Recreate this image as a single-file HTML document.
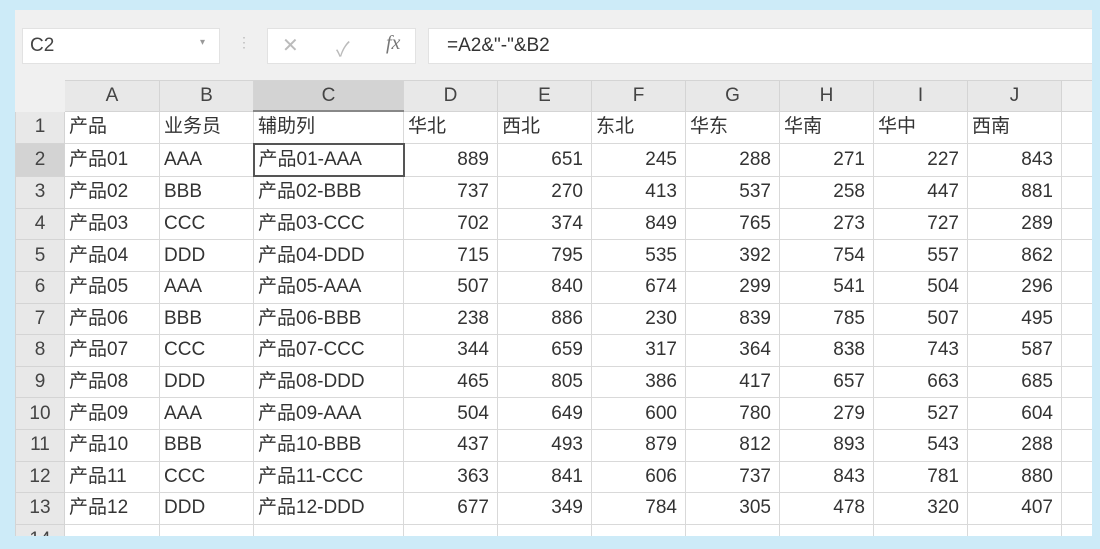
<!DOCTYPE html>
<html><head><meta charset="utf-8"><style>
body{margin:0;width:1100px;height:549px;background:#cdebf8;overflow:hidden;font-family:"Liberation Sans","Noto Sans CJK SC",sans-serif;position:relative}
#p{position:absolute;left:15px;top:10px;width:1077px;height:526px;background:#f0f0f0;overflow:hidden}
.box{position:absolute;background:#fff;border:1px solid #e2e2e2}
table{position:absolute;left:0;top:70px;border-collapse:collapse;table-layout:fixed;width:1096px}
td{height:30.6px;line-height:20px;border:1px solid #d9d9d9;font-size:19px;color:#333;padding:0 4px;white-space:nowrap;overflow:hidden;background:#fff;vertical-align:middle}
td.n{text-align:right;padding-right:8px}
tr.h td{background:#e8e8e8;text-align:center;color:#444;height:29px;border-color:#d4d4d4}
td.r{background:#e8e8e8;text-align:center;color:#444;border-color:#d4d4d4}
</style></head><body>
<div id="p">
<div class="box" style="left:7px;top:18px;width:196px;height:34px"><span style="position:absolute;left:7px;top:6px;font-size:19px;color:#444">C2</span><span style="position:absolute;right:14px;top:8px;font-size:10px;color:#999">▾</span></div>
<span style="position:absolute;left:222px;top:24px;color:#bbb;font-size:14px">⋮</span>
<div class="box" style="left:252px;top:18px;width:147px;height:34px;color:#bbb;font-size:20px"><span style="position:absolute;left:14px;top:4px">✕</span><span style="position:absolute;left:68px;top:4px">✓</span><span style="position:absolute;left:118px;top:3px;font-family:'Liberation Serif',serif;font-style:italic;color:#777">fx</span></div>
<div class="box" style="left:413px;top:18px;width:680px;height:34px"><span style="position:absolute;left:18px;top:6px;font-size:19px;color:#333">=A2&amp;"-"&amp;B2</span></div>
<svg style="position:absolute;left:20px;top:74px" width="28" height="24"><polygon points="27,0 27,23 4,23" fill="#bdbdbd"/></svg>
<table>
<colgroup><col style="width:49px"><col style="width:95px"><col style="width:94px"><col style="width:150px"><col style="width:94px"><col style="width:94px"><col style="width:94px"><col style="width:94px"><col style="width:94px"><col style="width:94px"><col style="width:94px"><col style="width:50px"></colgroup>
<tr class="h"><td style="background:#f0f0f0;border-color:#f0f0f0"></td><td>A</td><td>B</td><td style="background:#d3d3d3;border-bottom:2px solid #888">C</td><td>D</td><td>E</td><td>F</td><td>G</td><td>H</td><td>I</td><td>J</td><td style="background:#f0f0f0"></td></tr>
<tr><td class="r">1</td><td>产品</td><td>业务员</td><td>辅助列</td><td>华北</td><td>西北</td><td>东北</td><td>华东</td><td>华南</td><td>华中</td><td>西南</td><td></td></tr>
<tr><td class="r" style="background:#d3d3d3">2</td><td>产品01</td><td>AAA</td><td style="border:2px solid #555">产品01-AAA</td><td class="n">889</td><td class="n">651</td><td class="n">245</td><td class="n">288</td><td class="n">271</td><td class="n">227</td><td class="n">843</td><td></td></tr>
<tr><td class="r">3</td><td>产品02</td><td>BBB</td><td>产品02-BBB</td><td class="n">737</td><td class="n">270</td><td class="n">413</td><td class="n">537</td><td class="n">258</td><td class="n">447</td><td class="n">881</td><td></td></tr>
<tr><td class="r">4</td><td>产品03</td><td>CCC</td><td>产品03-CCC</td><td class="n">702</td><td class="n">374</td><td class="n">849</td><td class="n">765</td><td class="n">273</td><td class="n">727</td><td class="n">289</td><td></td></tr>
<tr><td class="r">5</td><td>产品04</td><td>DDD</td><td>产品04-DDD</td><td class="n">715</td><td class="n">795</td><td class="n">535</td><td class="n">392</td><td class="n">754</td><td class="n">557</td><td class="n">862</td><td></td></tr>
<tr><td class="r">6</td><td>产品05</td><td>AAA</td><td>产品05-AAA</td><td class="n">507</td><td class="n">840</td><td class="n">674</td><td class="n">299</td><td class="n">541</td><td class="n">504</td><td class="n">296</td><td></td></tr>
<tr><td class="r">7</td><td>产品06</td><td>BBB</td><td>产品06-BBB</td><td class="n">238</td><td class="n">886</td><td class="n">230</td><td class="n">839</td><td class="n">785</td><td class="n">507</td><td class="n">495</td><td></td></tr>
<tr><td class="r">8</td><td>产品07</td><td>CCC</td><td>产品07-CCC</td><td class="n">344</td><td class="n">659</td><td class="n">317</td><td class="n">364</td><td class="n">838</td><td class="n">743</td><td class="n">587</td><td></td></tr>
<tr><td class="r">9</td><td>产品08</td><td>DDD</td><td>产品08-DDD</td><td class="n">465</td><td class="n">805</td><td class="n">386</td><td class="n">417</td><td class="n">657</td><td class="n">663</td><td class="n">685</td><td></td></tr>
<tr><td class="r">10</td><td>产品09</td><td>AAA</td><td>产品09-AAA</td><td class="n">504</td><td class="n">649</td><td class="n">600</td><td class="n">780</td><td class="n">279</td><td class="n">527</td><td class="n">604</td><td></td></tr>
<tr><td class="r">11</td><td>产品10</td><td>BBB</td><td>产品10-BBB</td><td class="n">437</td><td class="n">493</td><td class="n">879</td><td class="n">812</td><td class="n">893</td><td class="n">543</td><td class="n">288</td><td></td></tr>
<tr><td class="r">12</td><td>产品11</td><td>CCC</td><td>产品11-CCC</td><td class="n">363</td><td class="n">841</td><td class="n">606</td><td class="n">737</td><td class="n">843</td><td class="n">781</td><td class="n">880</td><td></td></tr>
<tr><td class="r">13</td><td>产品12</td><td>DDD</td><td>产品12-DDD</td><td class="n">677</td><td class="n">349</td><td class="n">784</td><td class="n">305</td><td class="n">478</td><td class="n">320</td><td class="n">407</td><td></td></tr>
<tr><td class="r">14</td><td></td><td></td><td></td><td></td><td></td><td></td><td></td><td></td><td></td><td></td><td></td></tr>
</table>
</div>
</body></html>
